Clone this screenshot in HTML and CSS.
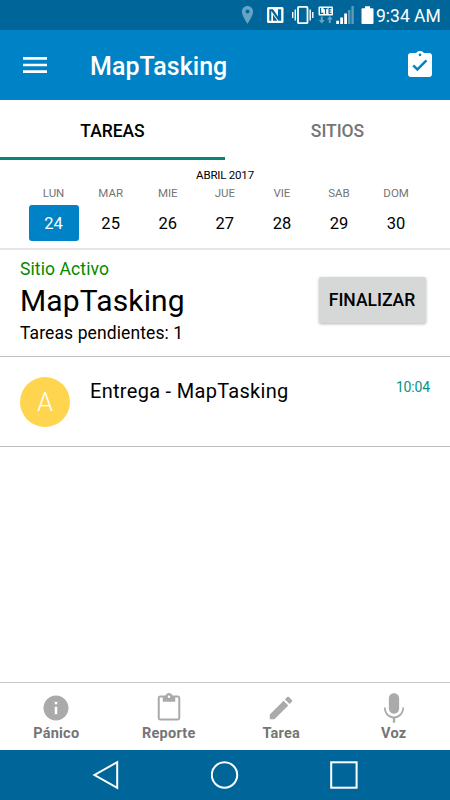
FILE: index.html
```html
<!DOCTYPE html>
<html lang="es">

<head>
    <meta charset="UTF-8">
    <meta name="viewport" content="width=device-width, initial-scale=1.0">
    <title>MapTasking</title>
    <link rel="stylesheet" href="styles.css">
</head>

<body>
    <div class="status-bar">
        <svg class="status-icons" width="146" height="30" viewBox="230 0 146 30">
            <!-- ubicacion -->
            <path fill="#66a3c4" fill-rule="evenodd" d="M247.5 6c-3.2 0-5.6 2.500-5.600 5.600 0 4 5.600 12.400 5.600 12.400s5.600-8.400 5.600-12.400c0-3.100-2.400-5.600-5.600-5.600zm0 3.600a2 2 0 1 1 0 4 2 2 0 0 1 0-4z" />
            <!-- nfc -->
            <rect x="267" y="7" width="16.500" height="16" rx="1.500" fill="#fff" />
            <path fill="#006699" d="M269.300 9.200h3.700l5 7.300V9.200h1.300v11.600h-.800l-7.200-9.800v9.800h-2zM273 14.800l4.400 6h-4.400zM279.300 9.200h1.900v11.600h-1.900z" />
            <!-- vibracion -->
            <rect x="298" y="6.800" width="9.500" height="16.400" rx="1" fill="none" stroke="#fff" stroke-width="1.800" />
            <path stroke="#fff" stroke-width="1.400" d="M295.300 9.500v11M310.200 9.500v11M292.700 12v6M312.800 12v6" />
            <!-- lte -->
            <rect x="318.500" y="6.500" width="14.500" height="9" rx="1" fill="#fff" />
            <path fill="none" stroke="#006699" stroke-width="1.200" d="M320.600 8v5.400h2.700M323.500 8.600h4M325.500 8.600v5.400M331.500 8.600h-2.400v4.800h2.400M329.100 11h2.200" />
            <path fill="#66a3c4" d="M320.800 16.500h2v3.500h2l-3 3.500-3-3.500h2zM328.800 23v-3.500h-2l3-3.500 3 3.500h-2V23z" />
            <!-- cobertura -->
            <path fill="#fff" d="M336.200 20.800h2.800V24h-2.800zM340.200 17.600h2.800V24h-2.800zM344.200 13.500h2.800V24h-2.800z" />
            <path fill="#5c9dbf" d="M348 10h2.400v14h-2.400zM351.400 6h2.400v18h-2.400z" />
            <!-- bateria -->
            <path fill="#fff" d="M365 6.300h5V8.300h2.500q1 0 1 1V23q0 1-1 1h-10q-1 0-1-1V9.300q0-1 1-1H365z" />
        </svg>
        <span class="clock">9:34 AM</span>
    </div>

    <header class="toolbar">
        <svg class="toolbar-icon" viewBox="0 0 24 24"><path d="M3 18h18v-2H3v2zm0-5h18v-2H3v2zm0-7v2h18V6H3z" /></svg>
        <h1 class="toolbar-title">MapTasking</h1>
        <svg class="toolbar-icon" viewBox="0 0 24 24"><path d="M19 3h-4.180C14.400 2.100 13.300 1.500 12 1.500c-1.300 0-2.400.6-2.820 1.500H5c-1.100 0-2 .9-2 2v14c0 1.100.9 2 2 2h14c1.100 0 2-.9 2-2V5c0-1.100-.9-2-2-2zm-7 .4c.55 0 1 .45 1 1s-.45 1-1 1-1-.45-1-1 .45-1 1-1zm-2 13.300l-3.700-3.700 1.300-1.300 2.400 2.400 6.200-6.200 1.300 1.300-7.500 7.500z" /></svg>
    </header>

    <nav class="tabs">
        <div class="tab tab-active">TAREAS</div>
        <div class="tab">SITIOS</div>
    </nav>

    <section class="calendar">
        <div class="month">ABRIL 2017</div>
        <div class="week">
            <div class="day selected"><span class="day-name">LUN</span><span class="day-number">24</span></div>
            <div class="day"><span class="day-name">MAR</span><span class="day-number">25</span></div>
            <div class="day"><span class="day-name">MIE</span><span class="day-number">26</span></div>
            <div class="day"><span class="day-name">JUE</span><span class="day-number">27</span></div>
            <div class="day"><span class="day-name">VIE</span><span class="day-number">28</span></div>
            <div class="day"><span class="day-name">SAB</span><span class="day-number">29</span></div>
            <div class="day"><span class="day-name">DOM</span><span class="day-number">30</span></div>
        </div>
    </section>

    <section class="site">
        <div class="site-info">
            <div class="site-status">Sitio Activo</div>
            <div class="site-name">MapTasking</div>
            <div class="site-pending">Tareas pendientes: 1</div>
        </div>
        <button class="finish-button">FINALIZAR</button>
    </section>

    <main class="task-list">
        <div class="task">
            <div class="avatar">A</div>
            <div class="task-title">Entrega - MapTasking</div>
            <div class="task-time">10:04</div>
        </div>
    </main>

    <nav class="bottom-menu">
        <div class="menu-item">
            <svg viewBox="0 0 24 24"><path d="M12 2C6.480 2 2 6.480 2 12s4.480 10 10 10 10-4.480 10-10S17.520 2 12 2zm1 15h-2v-6h2v6zm0-8h-2V7h2v2z" /></svg>
            <span class="menu-label">Pánico</span>
        </div>
        <div class="menu-item">
            <svg viewBox="0 0 24 24"><path d="M19 2h-4.180C14.400.84 13.300 0 12 0c-1.300 0-2.400.84-2.820 2H5c-1.100 0-2 .9-2 2v16c0 1.100.9 2 2 2h14c1.100 0 2-.9 2-2V4c0-1.100-.9-2-2-2zm-7 0c.55 0 1 .45 1 1s-.45 1-1 1-1-.45-1-1 .45-1 1-1zm7.400 18.400H4.600V3.600H7V7h10V3.600h2.400v16.800z" /></svg>
            <span class="menu-label menu-label-cut">Reporte</span>
        </div>
        <div class="menu-item">
            <svg viewBox="0 0 24 24"><path d="M3 17.250V21h3.750L17.810 9.940l-3.750-3.750L3 17.250zM20.710 7.040c.39-.39.39-1.020 0-1.410l-2.340-2.340c-.39-.39-1.020-.39-1.410 0l-1.830 1.830 3.750 3.750 1.830-1.830z" /></svg>
            <span class="menu-label">Tarea</span>
        </div>
        <div class="menu-item">
            <svg viewBox="0 0 24 24"><path d="M12 16.500c2.300 0 4.100-1.800 4.100-4.100V4.200C16.100 1.900 14.300.1 12 .1S7.900 1.900 7.900 4.200v8.200c0 2.300 1.800 4.100 4.100 4.100zM18.700 11.500c0 4.200-3.200 7.200-6.700 7.200s-6.700-3-6.700-7.200H3.900c0 4.600 3.200 8.200 7.200 8.800v3.500h1.800v-3.500c4-.6 7.200-4.200 7.200-8.800z" /></svg>
            <span class="menu-label">Voz</span>
        </div>
    </nav>

    <footer class="system-bar">
        <svg width="28" height="30" viewBox="0 0 28 30"><path d="M25.200 2.200v25.600L2.500 15z" /></svg>
        <svg width="28" height="30" viewBox="0 0 28 30"><circle cx="13.500" cy="15" r="12.700" /></svg>
        <svg width="28" height="30" viewBox="0 0 28 30"><rect x="1.200" y="2.300" width="25.400" height="25.400" /></svg>
    </footer>
</body>

</html>
```

FILE: styles.css
```css
* {
    box-sizing: border-box;
}

body {
    margin: 0;
    height: 800px;
    display: flex;
    flex-direction: column;
    overflow: hidden;
    font-family: Roboto, "Liberation Sans", sans-serif;
    color: #000;
    background-color: #fff;
}

.status-bar {
    height: 30px;
    display: flex;
    justify-content: flex-end;
    align-items: center;
    padding-right: 9px;
    color: #fff;
    background-color: #006699;
}

.clock {
    width: 65px;
    font-size: 17.5px;
    line-height: 30px;
    padding-top: 1px;
    white-space: nowrap;
}

.toolbar {
    height: 70px;
    display: flex;
    align-items: center;
    padding: 0 14px 0 19px;
    color: #fff;
    background-color: #0082c6;
}

.toolbar-icon {
    width: 32px;
    height: 32px;
    fill: #fff;
}

.toolbar-title {
    flex: 1;
    margin: 3px 0 0 39px;
    font-size: 25px;
    font-weight: 500;
    line-height: 30px;
    letter-spacing: 0.05px;
}

.tabs {
    height: 60px;
    display: flex;
}

.tab {
    flex: 1;
    padding-top: 1px;
    font-size: 17.5px;
    font-weight: 500;
    line-height: 60px;
    text-align: center;
    letter-spacing: -0.05px;
    color: #757575;
}

.tab-active {
    color: #000;
    border-bottom: 3px solid #00897b;
}

.calendar {
    height: 90px;
    padding: 7px 25px 0;
    border-bottom: 2px solid #e6e6e6;
}

.month {
    height: 16px;
    font-size: 11.5px;
    line-height: 16px;
    text-align: center;
    letter-spacing: -0.2px;
}

.week {
    display: grid;
    grid-template-columns: repeat(7, 57.1px);
}

.day {
    display: flex;
    flex-direction: column;
    align-items: center;
}

.day-name {
    height: 22px;
    font-size: 11.5px;
    line-height: 20px;
    color: #757575;
}

.day-number {
    width: 50px;
    height: 36px;
    border-radius: 3px;
    font-size: 16.5px;
    line-height: 38px;
    text-align: center;
}

.selected .day-number {
    color: #fff;
    background-color: #0082c6;
}

.site {
    height: 107px;
    display: flex;
    justify-content: space-between;
    padding: 7px 24px 0 20px;
    border-bottom: 1px solid #bdbdbd;
}

.site-status {
    font-size: 17.5px;
    line-height: 24px;
    letter-spacing: 0.1px;
    color: #008a00;
}

.site-name {
    font-size: 30px;
    line-height: 40px;
    letter-spacing: 0.15px;
}

.site-pending {
    font-size: 17.5px;
    line-height: 24px;
    letter-spacing: 0.1px;
}

.finish-button {
    width: 107px;
    height: 46px;
    margin-top: 20px;
    padding: 0 1px 0 0;
    border: none;
    border-radius: 2px;
    font-family: inherit;
    font-size: 17.5px;
    font-weight: 500;
    color: #000;
    background-color: #d6d7d7;
    box-shadow: 0 1px 3px rgba(0, 0, 0, 0.3);
}

.task-list {
    flex: 1;
}

.task {
    height: 90px;
    display: flex;
    padding: 20px 20px 0;
    border-bottom: 1px solid #bdbdbd;
}

.avatar {
    width: 50px;
    height: 50px;
    border-radius: 50%;
    font-size: 25px;
    font-weight: 300;
    line-height: 52px;
    text-align: center;
    color: #fff;
    background-color: #ffd54f;
}

.task-title {
    flex: 1;
    margin-left: 20px;
    font-size: 20px;
    line-height: 29px;
    letter-spacing: 0.3px;
}

.task-time {
    font-size: 14px;
    line-height: 20px;
    letter-spacing: -0.15px;
    color: #009688;
}

.bottom-menu {
    height: 68px;
    display: flex;
    border-top: 1px solid #c8c8c8;
}

.menu-item {
    flex: 1;
    display: flex;
    flex-direction: column;
    align-items: center;
    padding-top: 10px;
}

.menu-item svg {
    width: 30px;
    height: 30px;
    fill: #aaa;
}

.menu-label {
    font-size: 14.5px;
    font-weight: 700;
    line-height: 22px;
    letter-spacing: 0.25px;
    color: #757575;
}

/* descender of the "p" gets cut */
.menu-label-cut {
    height: 18px;
    overflow: hidden;
}

.system-bar {
    height: 50px;
    display: flex;
    justify-content: center;
    align-items: center;
    gap: 91px;
    background-color: #006699;
}

.system-bar svg {
    fill: none;
    stroke: #fff;
    stroke-width: 2;
}
```
